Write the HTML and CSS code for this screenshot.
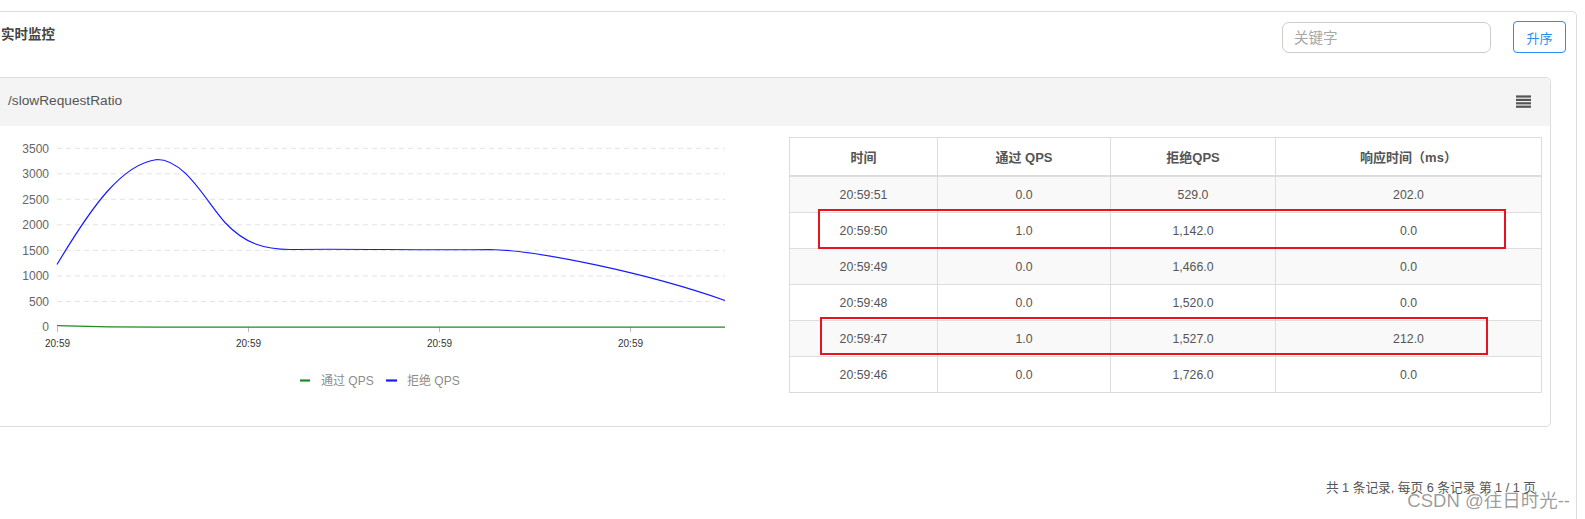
FILE: index.html
```html
<!DOCTYPE html>
<html lang="zh-CN">
<head>
<meta charset="utf-8">
<title>实时监控</title>
<link rel="stylesheet" href="styles.css">
</head>
<body>
<div class="outer">
  <div class="top-bar">
    <div class="title">实时监控</div>
    <div class="controls">
      <input class="search" type="text" placeholder="关键字">
      <button class="btn" type="button">升序</button>
    </div>
  </div>
  <div class="panel">
    <div class="panel-head">
      <span class="panel-title">/slowRequestRatio</span>
      <svg class="menu-icon" width="15" height="13" viewBox="0 0 15 13">
        <rect x="0" y="0.4" width="15" height="2.2" fill="#555"/>
        <rect x="0" y="3.8" width="15" height="2.2" fill="#555"/>
        <rect x="0" y="7.2" width="15" height="2.2" fill="#555"/>
        <rect x="0" y="10.6" width="15" height="2.2" fill="#555"/>
      </svg>
    </div>
    <div class="panel-body">
      <svg class="chart" width="789" height="299" viewBox="0 0 789 299">
        <g class="grid">
          <line x1="57" y1="22.3" x2="725" y2="22.3"/>
          <line x1="57" y1="47.8" x2="725" y2="47.8"/>
          <line x1="57" y1="73.3" x2="725" y2="73.3"/>
          <line x1="57" y1="98.8" x2="725" y2="98.8"/>
          <line x1="57" y1="124.4" x2="725" y2="124.4"/>
          <line x1="57" y1="149.9" x2="725" y2="149.9"/>
          <line x1="57" y1="175.4" x2="725" y2="175.4"/>
        </g>
        <g class="ylabels">
          <text x="49" y="26.5">3500</text>
          <text x="49" y="52">3000</text>
          <text x="49" y="77.5">2500</text>
          <text x="49" y="103">2000</text>
          <text x="49" y="128.5">1500</text>
          <text x="49" y="154">1000</text>
          <text x="49" y="179.5">500</text>
          <text x="49" y="205">0</text>
        </g>
        <g class="ticks">
          <line x1="57.5" y1="201" x2="57.5" y2="206"/>
          <line x1="248.5" y1="201" x2="248.5" y2="206"/>
          <line x1="439.5" y1="201" x2="439.5" y2="206"/>
          <line x1="630.5" y1="201" x2="630.5" y2="206"/>
        </g>
        <g class="xlabels">
          <text x="57.5" y="221">20:59</text>
          <text x="248.5" y="221">20:59</text>
          <text x="439.5" y="221">20:59</text>
          <text x="630.5" y="221">20:59</text>
        </g>
        <path class="line-pass" d="M57,199.6 C90,200.6 120,201.2 160,201.2 L725,201.2"/>
        <path class="line-block" d="M57,138.5 C92,80 122,38 157,33.5 C185,33.5 205,74 225,96.5 C245,118 265,123.5 290,123.5 C350,122.5 420,124.5 490,123.5 C540,124.5 650,148 725,174.5"/>
        <g class="legend">
          <line x1="300" y1="254.5" x2="310" y2="254.5" stroke="#1e8c1e" stroke-width="2.2"/>
          <text x="321" y="259">通过 QPS</text>
          <line x1="386" y1="254.5" x2="397" y2="254.5" stroke="#1a1aff" stroke-width="2.2"/>
          <text x="407" y="259">拒绝 QPS</text>
        </g>
      </svg>
      <div class="table-wrap">
        <table class="data">
          <colgroup>
            <col class="c1"><col class="c2"><col class="c3"><col class="c4">
          </colgroup>
          <thead>
            <tr><th>时间</th><th>通过 QPS</th><th>拒绝QPS</th><th>响应时间（ms）</th></tr>
          </thead>
          <tbody>
            <tr><td>20:59:51</td><td>0.0</td><td>529.0</td><td>202.0</td></tr>
            <tr><td>20:59:50</td><td>1.0</td><td>1,142.0</td><td>0.0</td></tr>
            <tr><td>20:59:49</td><td>0.0</td><td>1,466.0</td><td>0.0</td></tr>
            <tr><td>20:59:48</td><td>0.0</td><td>1,520.0</td><td>0.0</td></tr>
            <tr><td>20:59:47</td><td>1.0</td><td>1,527.0</td><td>212.0</td></tr>
            <tr><td>20:59:46</td><td>0.0</td><td>1,726.0</td><td>0.0</td></tr>
          </tbody>
        </table>
        <div class="mark mark-1"></div>
        <div class="mark mark-2"></div>
      </div>
    </div>
  </div>
  <div class="pager">共 1 条记录, 每页 6 条记录 第 1 / 1 页</div>
</div>
<div class="watermark">CSDN @往日时光--</div>
</body>
</html>
```
FILE: styles.css
```css
html, body {
  margin: 0;
  padding: 0;
  background: #fff;
  overflow: hidden;
}
body {
  font-family: "Liberation Sans", "Noto Sans CJK SC", sans-serif;
  color: #555;
  position: relative;
  height: 519px;
}
.outer {
  margin: 11px 8px 0 0;
  border-top: 1px solid #ddd;
  border-right: 1px solid #ddd;
  border-top-right-radius: 5px;
  height: 600px;
}
.top-bar {
  display: flex;
  justify-content: space-between;
  align-items: flex-start;
  height: 65px;
  padding-right: 10px;
}
.title {
  margin-top: 14px;
  padding-left: 1px;
  font-size: 13.5px;
  line-height: 18px;
  font-weight: bold;
  color: #444;
}
.controls {
  display: flex;
  align-items: flex-start;
  gap: 22px;
  margin-top: 9px;
}
.search {
  box-sizing: border-box;
  width: 209px;
  height: 31px;
  margin: 1px 0 0 0;
  padding: 0 11px;
  border: 1px solid #ccc;
  border-radius: 7px;
  font-family: "Liberation Sans", "Noto Sans CJK SC", sans-serif;
  font-size: 14.5px;
  outline: none;
}
.search::placeholder {
  color: #a8a8a8;
}
.btn {
  box-sizing: border-box;
  width: 53px;
  height: 32px;
  padding: 0;
  background: #fff;
  border: 1px solid #2d8cf0;
  border-radius: 4px;
  color: #2d8cf0;
  font-family: "Liberation Sans", "Noto Sans CJK SC", sans-serif;
  font-size: 13px;
}
.panel {
  margin-right: 25px;
  border: 1px solid #ddd;
  border-left: none;
  border-radius: 0 5px 5px 0;
}
.panel-head {
  display: flex;
  justify-content: space-between;
  align-items: center;
  height: 48px;
  padding: 0 19px 0 8px;
  background: #f4f4f4;
  border-top-right-radius: 5px;
}
.panel-title {
  font-size: 13.7px;
  color: #555;
  line-height: 20px;
  margin-top: -3px;
}
.menu-icon {
  display: block;
  margin-top: -1px;
}
.panel-body {
  display: flex;
  align-items: flex-start;
  height: 300px;
}
.chart {
  display: block;
  flex: none;
}
.grid line {
  stroke: #e3e3e3;
  stroke-width: 1;
  stroke-dasharray: 5 4;
}
.ylabels text {
  font-family: "Liberation Sans", sans-serif;
  font-size: 12px;
  fill: #666;
  text-anchor: end;
}
.xlabels text {
  font-family: "Liberation Sans", sans-serif;
  font-size: 10px;
  fill: #333;
  text-anchor: middle;
}
.ticks line {
  stroke: #bbb;
  stroke-width: 1;
}
.line-pass {
  fill: none;
  stroke: #1e8c1e;
  stroke-width: 1.3;
}
.line-block {
  fill: none;
  stroke: #1a1aff;
  stroke-width: 1.2;
}
.legend text {
  font-family: "Liberation Sans", "Noto Sans CJK SC", sans-serif;
  font-size: 12px;
  fill: #8c8c8c;
}
.table-wrap {
  position: relative;
  margin-top: 11px;
}
.data {
  border-collapse: collapse;
  table-layout: fixed;
  width: 752px;
  font-size: 12.3px;
  color: #555;
}
.c1 { width: 148px; }
.c2 { width: 173px; }
.c3 { width: 165px; }
.c4 { width: 266px; }
.data th,
.data td {
  border: 1px solid #ddd;
  text-align: center;
  padding: 0;
}
.data th {
  height: 37px;
  border-bottom-width: 2px;
  font-size: 13px;
  font-weight: bold;
  color: #555;
}
.data td {
  height: 35px;
}
.data tbody tr:nth-child(odd) td {
  background: #f9f9f9;
}
.mark {
  position: absolute;
  box-sizing: border-box;
  border: 2.3px solid #e8131f;
}
.mark-1 {
  left: 29px;
  top: 72px;
  width: 688px;
  height: 40px;
}
.mark-2 {
  left: 31px;
  top: 179.5px;
  width: 668px;
  height: 38px;
}
.pager {
  margin-top: 52px;
  padding-right: 40px;
  text-align: right;
  font-size: 12.7px;
  line-height: 18px;
  color: #555;
}
.watermark {
  position: absolute;
  right: 15px;
  top: 490px;
  font-size: 18.5px;
  line-height: 22px;
  color: rgba(90, 90, 90, 0.6);
  white-space: nowrap;
}
```
